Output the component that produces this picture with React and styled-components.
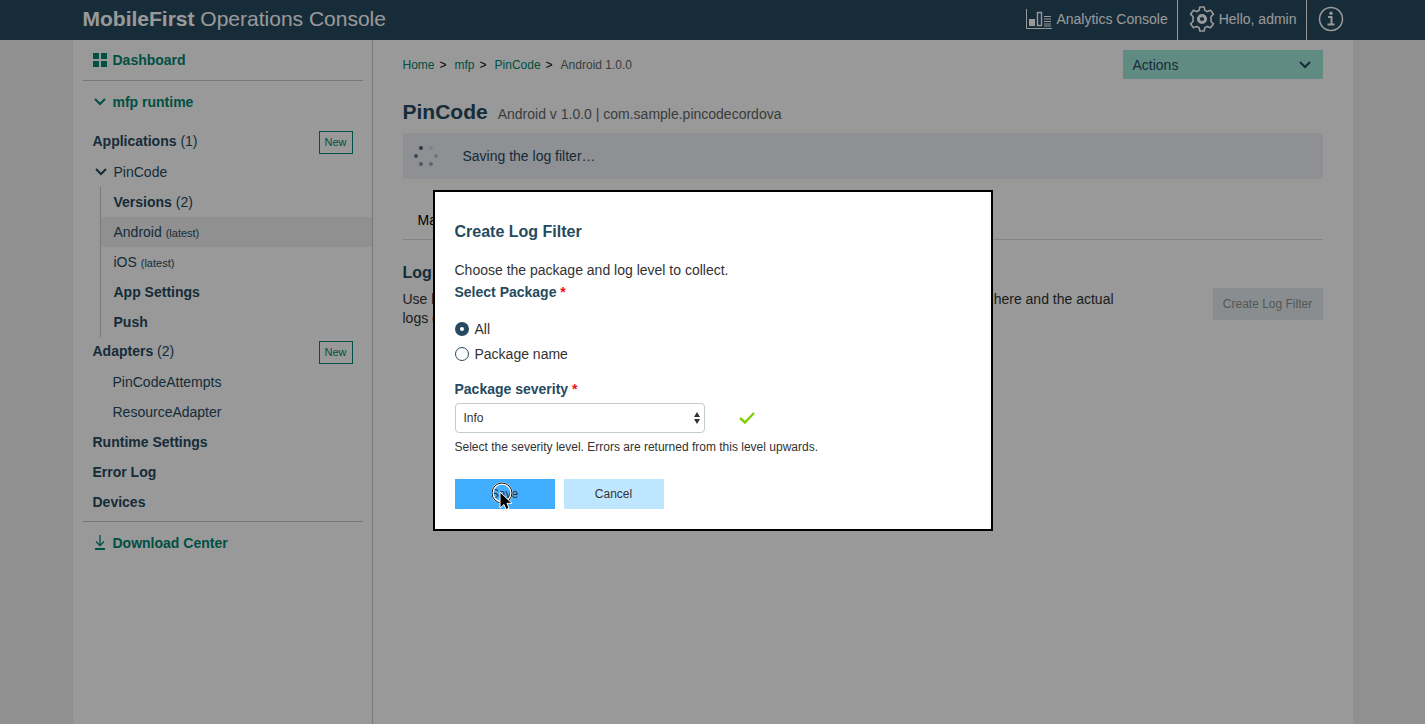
import React from 'react';
import styled, { createGlobalStyle } from 'styled-components';

const navy = '#264a60';
const teal = '#008571';

const GlobalStyle = createGlobalStyle`
  * { box-sizing: border-box; }
  body {
    margin: 0;
    background: #f0f0f0;
    color: #323232;
    font: 14px/20px "Liberation Sans", Arial, sans-serif;
  }
  a { color: inherit; text-decoration: none; }
  button, select, input { font-family: inherit; margin: 0; }
  h1, h2, h3, p, ul, ol, fieldset { margin: 0; padding: 0; border: 0; list-style: none; }
`;

const Shell = styled.div`
  max-width: 1280px;
  margin: 0 auto;
`;

const TopBar = styled.header`
  background: ${navy};
  color: #fff;
`;

const TopBarInner = styled(Shell)`
  display: flex;
  justify-content: space-between;
  height: 40px;
  padding-left: 10px;
`;

const Brand = styled.h1`
  font-size: 21px;
  line-height: 38px;
  font-weight: 400;
`;

const TopLinks = styled.nav`
  display: flex;
`;

const TopLink = styled.a`
  display: flex;
  align-items: center;
  gap: 4px;
  padding: 0 9px 2px 11px;
  border-left: ${(p) => (p.$divided ? '1px solid #fff' : '0')};
`;

const Page = styled(Shell)`
  display: flex;
  min-height: calc(100vh - 40px);
  background: #fff;
`;

const Sidebar = styled.nav`
  flex: 0 0 300px;
  border-right: 1px solid #c0cfcf;
`;

const SideHead = styled.a`
  display: flex;
  align-items: center;
  gap: 6px;
  height: ${(p) => p.$height || 42}px;
  margin-left: 20px;
  color: ${teal};
  font-weight: 700;
`;

const Rule = styled.hr`
  height: 1px;
  margin: 0 9px 0 10px;
  border: 0;
  background: #c0c8c8;
`;

const IconSlot = styled.span`
  display: flex;
  justify-content: center;
  width: 14px;
`;

const SideRow = styled.div`
  display: flex;
  align-items: center;
  justify-content: space-between;
  height: 30px;
  padding: 0 19px 0 ${(p) => p.$indent || 20}px;
  color: ${navy};
  background: ${(p) => (p.$active ? '#f0f0f0' : 'transparent')};
  a { display: inline-flex; align-items: center; gap: 6px; }
  small { font-size: 11px; }
`;

const GroupRow = styled(SideRow)`
  padding-bottom: 3px;
`;

const SideGroup = styled.div`
  padding: 4px 0;
`;

const SubTree = styled.div`
  margin-left: 27px;
  border-left: 1px solid #c0cfcf;
`;

const NewButton = styled.button`
  width: 34px;
  height: 23px;
  margin-top: 3px;
  padding: 0;
  border: 1px solid ${teal};
  background: transparent;
  color: ${teal};
  font-size: 11px;
`;

const Main = styled.main`
  flex: 1;
  min-width: 0;
  padding: 10px 30px 0;
`;

const MainTop = styled.div`
  display: flex;
  align-items: center;
  justify-content: space-between;
`;

const Crumbs = styled.ol`
  display: flex;
  font-size: 12px;
  color: #5f6868;
  a { color: ${teal}; }
  span { margin: 0 8px 0 5px; color: #000; }
`;

const ActionsButton = styled.button`
  display: flex;
  align-items: center;
  justify-content: space-between;
  width: 200px;
  height: 29px;
  padding: 0 12px 0 10px;
  border: 0;
  background: #9ee8da;
  color: ${navy};
  font-size: 14px;
`;

const AppTitle = styled.div`
  display: flex;
  align-items: baseline;
  gap: 10px;
  height: 54px;
  padding-top: 21px;
  color: #5f6868;
  h2 { color: ${navy}; font-size: 21px; line-height: 24px; }
`;

const StatusBar = styled.div`
  display: flex;
  align-items: center;
  gap: 25px;
  height: 46px;
  padding-left: 10px;
  background: #eff0f5;
  color: ${navy};
`;

const Tabs = styled.div`
  height: 61px;
  padding: 31px 15px 0;
  border-bottom: 1px solid #d5dcda;
  color: #000;
`;

const LogSection = styled.section`
  padding-top: 23px;
  h3 { color: ${navy}; font-size: 16px; line-height: 20px; }
`;

const LogBody = styled.div`
  display: flex;
  align-items: flex-start;
  justify-content: space-between;
  padding-top: 5px;
  p { flex: 1; max-width: 720px; padding-top: 2px; line-height: 19px; }
`;

const CreateButton = styled.button`
  width: 110px;
  height: 32px;
  padding: 0;
  border: 0;
  background: #e4ecee;
  color: #8b9292;
  font-size: 12px;
`;

const Backdrop = styled.div`
  position: fixed;
  inset: 0;
  padding-top: 190px;
  background: rgba(0, 0, 0, 0.4);
`;

const Dialog = styled.form`
  position: relative;
  width: 560px;
  margin: 0 auto;
  padding: 29px 20px 20px;
  border: 2px solid #000;
  background: #fff;
  h2 { margin-bottom: 17px; color: ${navy}; font-size: 16px; line-height: 22px; }
`;

const FieldTitle = styled.div`
  line-height: 24px;
  color: ${navy};
  font-weight: 700;
  span { color: #f01020; }
`;

const Options = styled.div`
  padding: 12px 0 11px;
`;

const Option = styled.label`
  display: flex;
  align-items: center;
  gap: 6px;
  height: 25px;
`;

const Radio = styled.input`
  appearance: none;
  width: 14px;
  height: 14px;
  border: 1px solid ${navy};
  border-radius: 50%;
  background: #fff;
  &:checked { border-width: 5px; }
`;

const SelectRow = styled.div`
  display: flex;
  align-items: center;
  gap: 34px;
  margin-top: 2px;
`;

const SelectWrap = styled.div`
  display: grid;
  align-items: center;
  width: 250px;
  > * { grid-area: 1 / 1; }
  svg { justify-self: end; margin-right: 5px; pointer-events: none; }
`;

const Select = styled.select`
  appearance: none;
  height: 30px;
  padding: 0 8px;
  border: 1px solid #c0cccc;
  border-radius: 4px;
  background: #fff;
  color: #323232;
  font-size: 12px;
`;

const Hint = styled.p`
  padding: 4px 0 22px;
  font-size: 12px;
`;

const Buttons = styled.div`
  display: flex;
  gap: 9px;
`;

const DialogButton = styled.button`
  width: 100px;
  height: 30px;
  padding: 0;
  border: 0;
  background: ${(p) => (p.$primary ? '#41aeff' : '#bfe6ff')};
  color: #323232;
  font-size: 12px;
`;

const Pointer = styled.svg`
  position: absolute;
  left: 55px;
  bottom: 16px;
  pointer-events: none;
`;

const Chevron = () => (
  <svg width="12" height="8" viewBox="0 0 12 8" fill="none" stroke="currentColor" strokeWidth="2">
    <path d="M1 1l5 5 5-5" />
  </svg>
);

const GridIcon = () => (
  <svg width="14" height="14" viewBox="0 0 14 14" fill="currentColor">
    <path d="M0 0h6v6H0zM8 0h6v6H8zM0 8h6v6H0zM8 8h6v6H8z" />
  </svg>
);

const DownloadIcon = () => (
  <svg width="12" height="16" viewBox="0 0 12 16" fill="none" stroke="currentColor">
    <path d="M6 0v10M2 6.500l4 4 4-4" strokeWidth="1.300" />
    <path d="M1 14h10" strokeWidth="2" />
  </svg>
);

const ChartIcon = () => (
  <svg width="26" height="20" viewBox="0 0 26 20" fill="none" stroke="currentColor">
    <path d="M.5 0v19.500H26" />
    <path d="M3 10h6v7H3z" fill="currentColor" stroke="none" />
    <path d="M11.500 3.500h4v13h-4z" strokeWidth="1.400" />
    <path d="M18 7.500h7M18 10h7M18 12.500h7M18 15h7M18 17h7" />
  </svg>
);

const GearIcon = () => (
  <svg width="26" height="26" viewBox="0 0 26 26" fill="none" stroke="currentColor" strokeWidth="1.600" strokeLinejoin="round">
    <path d="M10.800 1h4.400l.6 3.200 2.500 1.400 3.200-1.400 3 4-2.500 2.300v5l2.500 2.300-3 4-3.200-1.400-2.500 1.400-.6 3.200h-4.400l-.6-3.200-2.500-1.400-3.200 1.400-3-4L4 15.500v-5L1.500 8.200l3-4 3.200 1.400 2.500-1.400z" />
    <circle cx="13" cy="13" r="3.600" strokeWidth="3" />
  </svg>
);

const InfoIcon = () => (
  <svg width="26" height="26" viewBox="0 0 26 26" fill="none" stroke="currentColor">
    <circle cx="13" cy="13" r="11.500" strokeWidth="1.500" />
    <circle cx="13" cy="7.300" r="1.700" fill="currentColor" stroke="none" />
    <path d="M10 11h3.500v7.500M9.500 18.500h7" strokeWidth="2" />
  </svg>
);

const Spinner = () => (
  <svg width="25" height="24" viewBox="0 0 25 24" fill={navy}>
    <circle cx="8" cy="4" r="2" opacity=".85" />
    <circle cx="18" cy="4" r="2" opacity=".12" />
    <circle cx="3" cy="12" r="2" opacity=".7" />
    <circle cx="23" cy="12" r="2" opacity=".28" />
    <circle cx="8" cy="20" r="2" opacity=".55" />
    <circle cx="18" cy="20" r="2" opacity=".42" />
  </svg>
);

export default function App() {
  return (
    <>
      <GlobalStyle />
      <TopBar>
        <TopBarInner>
          <Brand><b>MobileFirst</b> Operations Console</Brand>
          <TopLinks>
            <TopLink href="#analytics"><ChartIcon />Analytics Console</TopLink>
            <TopLink href="#user" $divided><GearIcon />Hello, admin</TopLink>
            <TopLink href="#info" aria-label="Info" $divided><InfoIcon /></TopLink>
          </TopLinks>
        </TopBarInner>
      </TopBar>
      <Page>
        <Sidebar>
          <SideHead href="#dashboard" $height={40}><IconSlot><GridIcon /></IconSlot>Dashboard</SideHead>
          <Rule />
          <SideHead href="#runtime"><IconSlot><Chevron /></IconSlot>mfp runtime</SideHead>
          <SideGroup>
            <GroupRow>
              <span><b>Applications</b> (1)</span>
              <NewButton>New</NewButton>
            </GroupRow>
            <SideRow $indent={21}><a href="#pincode"><IconSlot><Chevron /></IconSlot>PinCode</a></SideRow>
            <SubTree>
              <SideRow $indent={13}><span><b>Versions</b> (2)</span></SideRow>
              <SideRow $indent={13} $active><a href="#android"><span>Android <small>(latest)</small></span></a></SideRow>
              <SideRow $indent={13}><a href="#ios"><span>iOS <small>(latest)</small></span></a></SideRow>
              <SideRow $indent={13}><a href="#settings"><b>App Settings</b></a></SideRow>
              <SideRow $indent={13}><a href="#push"><b>Push</b></a></SideRow>
            </SubTree>
            <GroupRow>
              <span><b>Adapters</b> (2)</span>
              <NewButton>New</NewButton>
            </GroupRow>
            <SideRow $indent={40}><a href="#attempts">PinCodeAttempts</a></SideRow>
            <SideRow $indent={40}><a href="#resource">ResourceAdapter</a></SideRow>
            <SideRow><a href="#runtime-settings"><b>Runtime Settings</b></a></SideRow>
            <SideRow><a href="#errors"><b>Error Log</b></a></SideRow>
            <SideRow><a href="#devices"><b>Devices</b></a></SideRow>
          </SideGroup>
          <Rule />
          <SideHead href="#downloads"><IconSlot><DownloadIcon /></IconSlot>Download Center</SideHead>
        </Sidebar>
        <Main>
          <MainTop>
            <Crumbs>
              <li><a href="#home">Home</a><span>&gt;</span></li>
              <li><a href="#mfp">mfp</a><span>&gt;</span></li>
              <li><a href="#pincode">PinCode</a><span>&gt;</span></li>
              <li>Android 1.0.0</li>
            </Crumbs>
            <ActionsButton>Actions<Chevron /></ActionsButton>
          </MainTop>
          <AppTitle><h2>PinCode</h2>Android v 1.0.0 | com.sample.pincodecordova</AppTitle>
          <StatusBar role="status"><Spinner />Saving the log filter…</StatusBar>
          <Tabs>Management</Tabs>
          <LogSection>
            <h3>Log Filters</h3>
            <LogBody>
              <p>Use log filters to control the log collection for your mobile application. The log filters are defined here and the actual logs collected are in the Analytics Console.</p>
              <CreateButton>Create Log Filter</CreateButton>
            </LogBody>
          </LogSection>
        </Main>
      </Page>
      <Backdrop>
        <Dialog role="dialog" aria-labelledby="dialog-title">
          <h2 id="dialog-title">Create Log Filter</h2>
          <p>Choose the package and log level to collect.</p>
          <FieldTitle>Select Package <span>*</span></FieldTitle>
          <Options role="radiogroup" aria-label="Select Package">
            <Option><Radio type="radio" name="package" defaultChecked />All</Option>
            <Option><Radio type="radio" name="package" />Package name</Option>
          </Options>
          <FieldTitle as="label" htmlFor="severity">Package severity <span>*</span></FieldTitle>
          <SelectRow>
            <SelectWrap>
              <Select id="severity"><option>Info</option></Select>
              <svg width="6" height="12" viewBox="0 0 6 12" fill="#323232"><path d="M3 0l3 5H0zM3 12l3-5H0z" /></svg>
            </SelectWrap>
            <svg width="16" height="12" viewBox="0 0 16 12" fill="none" stroke="#7ed000" strokeWidth="2.400"><path d="M1 6l5 4.500L15 1" /></svg>
          </SelectRow>
          <Hint>Select the severity level. Errors are returned from this level upwards.</Hint>
          <Buttons>
            <DialogButton type="button" $primary>Save</DialogButton>
            <DialogButton type="button">Cancel</DialogButton>
          </Buttons>
          <Pointer width="24" height="32" viewBox="0 0 24 32">
            <circle cx="12" cy="12" r="9.500" fill="none" stroke="#fff" strokeWidth="2.400" />
            <circle cx="12" cy="12" r="10" fill="none" stroke="#111" />
            <path d="M10 11v16l4-3.500 2 5 3-1.200-2-5h5z" fill="#000" stroke="#fff" />
          </Pointer>
        </Dialog>
      </Backdrop>
    </>
  );
}
